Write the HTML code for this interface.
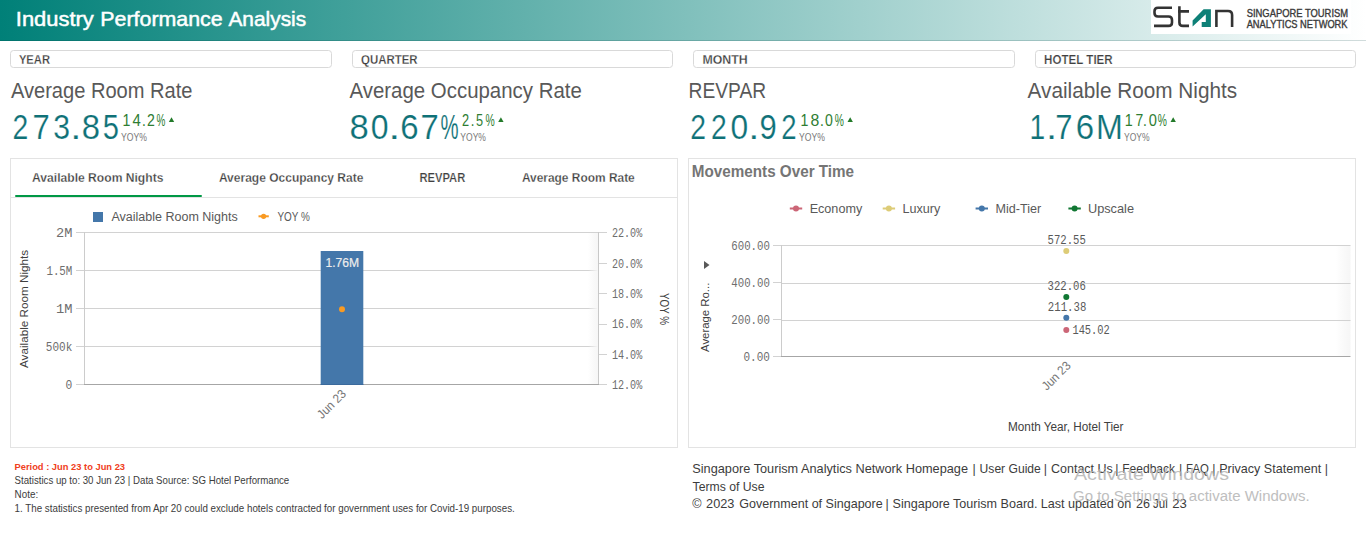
<!DOCTYPE html>
<html><head><meta charset="utf-8"><title>Industry Performance Analysis</title>
<style>
html,body{margin:0;padding:0;background:#fff;width:1366px;height:538px;overflow:hidden;font-family:"Liberation Sans",sans-serif}
#hdr{position:absolute;left:0;top:0;width:1366px;height:40px;background:linear-gradient(to right,#008078 0px,#ffffff 1366px);border-bottom:1px solid rgba(0,60,60,0.18)}
#logo{position:absolute;left:1151px;top:0;width:200px;height:34px;background:#fff}
svg{display:block}
</style></head><body>
<div id="hdr"></div>
<div id="logo"></div>
<svg style="position:absolute;left:1145px;top:0" width="100" height="36" viewBox="1145 0 100 36">
<path d="M1172,7.8 H1158 Q1154.5,7.8 1154.5,11.3 V13 Q1154.5,16.5 1158,16.5 H1168.5 Q1172,16.5 1172,20 V22.4 Q1172,25.9 1168.5,25.9 H1154" fill="none" stroke="#333" stroke-width="2.6"/>
<path d="M1179.4,6.2 V22.4 Q1179.4,25.9 1182.9,25.9 H1189 M1178,11.35 H1189" fill="none" stroke="#333" stroke-width="2.6"/>
<path d="M1192.6,20.5 L1192.6,26.4 L1205.8,14.3 L1205.8,22 L1201.7,22 L1201.7,27 L1210.9,27 L1210.9,9.15 L1203.6,9.15 Z" fill="#0e8077"/>
<path d="M1216.4,27 V11 H1228 Q1232.1,11 1232.1,15 V27" fill="none" stroke="#333" stroke-width="2.6"/>
</svg>
<svg style="position:absolute;left:0;top:0" width="1366" height="538" viewBox="0 0 1366 538">
<defs><linearGradient id="fadeR" x1="0" x2="1" y1="0" y2="0"><stop offset="0" stop-color="#f4f4f4" stop-opacity="0"/><stop offset="1" stop-color="#f6f6f6" stop-opacity="1"/></linearGradient></defs>
<rect x="10.5" y="50.5" width="321.0" height="17" rx="3" ry="3" fill="#fff" stroke="#d9d9d9" stroke-width="1"/>
<rect x="352.5" y="50.5" width="320.0" height="17" rx="3" ry="3" fill="#fff" stroke="#d9d9d9" stroke-width="1"/>
<rect x="693.5" y="50.5" width="321.0" height="17" rx="3" ry="3" fill="#fff" stroke="#d9d9d9" stroke-width="1"/>
<rect x="1035.5" y="50.5" width="320.0" height="17" rx="3" ry="3" fill="#fff" stroke="#d9d9d9" stroke-width="1"/>
<rect x="10.5" y="158.5" width="667" height="289" fill="#fff" stroke="#e3e3e3" stroke-width="1"/>
<rect x="688.5" y="158.5" width="667" height="289" fill="#fff" stroke="#e3e3e3" stroke-width="1"/>
<line x1="11" y1="197.5" x2="677" y2="197.5" stroke="#e3e3e3" stroke-width="1"/>
<rect x="15" y="195" width="187" height="2" rx="1" fill="#009845"/>
<line x1="84" y1="232.5" x2="598" y2="232.5" stroke="#d2d2d2"/>
<line x1="76" y1="232.5" x2="84" y2="232.5" stroke="#d2d2d2"/>
<line x1="84" y1="270.5" x2="598" y2="270.5" stroke="#d2d2d2"/>
<line x1="76" y1="270.5" x2="84" y2="270.5" stroke="#d2d2d2"/>
<line x1="84" y1="308.5" x2="598" y2="308.5" stroke="#d2d2d2"/>
<line x1="76" y1="308.5" x2="84" y2="308.5" stroke="#d2d2d2"/>
<line x1="84" y1="346.5" x2="598" y2="346.5" stroke="#d2d2d2"/>
<line x1="76" y1="346.5" x2="84" y2="346.5" stroke="#d2d2d2"/>
<line x1="76" y1="384.5" x2="84" y2="384.5" stroke="#d2d2d2"/>
<line x1="84.5" y1="232" x2="84.5" y2="384" stroke="#cccccc"/>
<line x1="598.5" y1="232" x2="598.5" y2="384" stroke="#c8c8c8"/>
<line x1="599" y1="232.5" x2="607" y2="232.5" stroke="#d2d2d2"/>
<line x1="599" y1="263.5" x2="607" y2="263.5" stroke="#d2d2d2"/>
<line x1="599" y1="293.5" x2="607" y2="293.5" stroke="#d2d2d2"/>
<line x1="599" y1="324.5" x2="607" y2="324.5" stroke="#d2d2d2"/>
<line x1="599" y1="354.5" x2="607" y2="354.5" stroke="#d2d2d2"/>
<line x1="599" y1="384.5" x2="607" y2="384.5" stroke="#d2d2d2"/>
<line x1="84" y1="384.5" x2="599" y2="384.5" stroke="#a6a6a6"/>
<rect x="320.7" y="251" width="42.6" height="134" fill="#4477aa"/>
<rect x="320.7" y="384" width="42.6" height="1" fill="#3b6a9c"/>
<circle cx="342" cy="309.3" r="3" fill="#f99a22"/>
<rect x="93" y="212" width="10" height="10" fill="#4477aa"/>
<rect x="258.5" y="215.3" width="10.3" height="2" fill="#f99a22"/><circle cx="263.6" cy="216.3" r="2.6" fill="#f99a22"/>
<rect x="1336" y="245" width="14.5" height="111" fill="url(#fadeR)"/>
<rect x="588" y="233" width="10" height="151" fill="url(#fadeR)"/>
<line x1="781" y1="245.5" x2="1350.5" y2="245.5" stroke="#d2d2d2"/>
<line x1="781" y1="283.5" x2="1350.5" y2="283.5" stroke="#d2d2d2"/>
<line x1="781" y1="320.5" x2="1350.5" y2="320.5" stroke="#d2d2d2"/>
<line x1="773" y1="245.5" x2="781" y2="245.5" stroke="#d2d2d2"/>
<line x1="773" y1="282.5" x2="781" y2="282.5" stroke="#d2d2d2"/>
<line x1="773" y1="319.5" x2="781" y2="319.5" stroke="#d2d2d2"/>
<line x1="773" y1="356.5" x2="781" y2="356.5" stroke="#d2d2d2"/>
<line x1="781.5" y1="245" x2="781.5" y2="356" stroke="#cccccc"/>
<line x1="781" y1="356.5" x2="1350.5" y2="356.5" stroke="#a6a6a6"/>
<circle cx="1066.3" cy="251" r="3" fill="#ddcc77"/>
<circle cx="1066.3" cy="297" r="3" fill="#117733"/>
<circle cx="1066.3" cy="317.8" r="3" fill="#4477aa"/>
<circle cx="1066.3" cy="330" r="3" fill="#cc6677"/>
<rect x="789.8" y="207.5" width="12.4" height="2" fill="#cc6677"/><circle cx="796.0" cy="208.5" r="3" fill="#cc6677"/>
<rect x="882.7" y="207.5" width="12.4" height="2" fill="#ddcc77"/><circle cx="888.9000000000001" cy="208.5" r="3" fill="#ddcc77"/>
<rect x="975.6" y="207.5" width="12.4" height="2" fill="#4477aa"/><circle cx="981.8000000000001" cy="208.5" r="3" fill="#4477aa"/>
<rect x="1068.4" y="207.5" width="12.4" height="2" fill="#117733"/><circle cx="1074.6000000000001" cy="208.5" r="3" fill="#117733"/>
<path d="M704 261 L709.5 265 L704 269 Z" fill="#595959"/>
<path d="M171.5 117.2 L174.2 121.9 L168.8 121.9 Z" fill="#237a2a"/>
<path d="M500.9 117.2 L503.59999999999997 121.9 L498.2 121.9 Z" fill="#237a2a"/>
<path d="M850.2 117.2 L852.9000000000001 121.9 L847.5 121.9 Z" fill="#237a2a"/>
<path d="M1173.2 117.2 L1175.9 121.9 L1170.5 121.9 Z" fill="#237a2a"/>
<text transform="translate(15.81 25.75) scale(1.0411 1)" fill="#ffffff" style="font-family:'Liberation Sans',sans-serif;font-size:21.08px;font-weight:normal" stroke="#ffffff" stroke-width="0.5">Industry</text>
<text transform="translate(100.34 25.75) scale(1.0148 1)" fill="#ffffff" style="font-family:'Liberation Sans',sans-serif;font-size:21.08px;font-weight:normal" stroke="#ffffff" stroke-width="0.5">Performance</text>
<text transform="translate(228.45 25.75) scale(0.9904 1)" fill="#ffffff" style="font-family:'Liberation Sans',sans-serif;font-size:21.08px;font-weight:normal" stroke="#ffffff" stroke-width="0.5">Analysis</text>
<text transform="translate(1246.67 16.52) scale(0.9168 1)" fill="#3a3a3a" style="font-family:'Liberation Sans',sans-serif;font-size:10.25px;font-weight:normal" stroke="#3a3a3a" stroke-width="0.35">SINGAPORE TOURISM</text>
<text transform="translate(1246.67 27.52) scale(0.9064 1)" fill="#3a3a3a" style="font-family:'Liberation Sans',sans-serif;font-size:10.25px;font-weight:normal" stroke="#3a3a3a" stroke-width="0.35">ANALYTICS NETWORK</text>
<text transform="translate(18.88 63.92) scale(0.8550 1)" fill="#404040" style="font-family:'Liberation Sans',sans-serif;font-size:13.15px;font-weight:bold" stroke="#ffffff" stroke-width="0.25">YEAR</text>
<text transform="translate(360.98 63.92) scale(0.8712 1)" fill="#404040" style="font-family:'Liberation Sans',sans-serif;font-size:13.15px;font-weight:bold" stroke="#ffffff" stroke-width="0.25">QUARTER</text>
<text transform="translate(702.38 63.92) scale(0.9385 1)" fill="#404040" style="font-family:'Liberation Sans',sans-serif;font-size:13.15px;font-weight:bold" stroke="#ffffff" stroke-width="0.25">MONTH</text>
<text transform="translate(1044.08 63.92) scale(0.8821 1)" fill="#404040" style="font-family:'Liberation Sans',sans-serif;font-size:13.15px;font-weight:bold" stroke="#ffffff" stroke-width="0.25">HOTEL TIER</text>
<text transform="translate(10.90 97.80) scale(0.9346 1)" fill="#595959" style="font-family:'Liberation Sans',sans-serif;font-size:21.51px;font-weight:normal">Average Room Rate</text>
<text transform="translate(349.50 97.80) scale(0.9493 1)" fill="#595959" style="font-family:'Liberation Sans',sans-serif;font-size:21.51px;font-weight:normal">Average Occupancy Rate</text>
<text transform="translate(688.61 97.80) scale(0.8934 1)" fill="#595959" style="font-family:'Liberation Sans',sans-serif;font-size:21.51px;font-weight:normal">REVPAR</text>
<text transform="translate(1027.60 97.80) scale(0.9651 1)" fill="#595959" style="font-family:'Liberation Sans',sans-serif;font-size:21.51px;font-weight:normal">Available Room Nights</text>
<text transform="translate(12.39 139.30) scale(0.8118 1)" fill="#0f7177" style="font-family:'Liberation Sans',sans-serif;font-size:34.88px;font-weight:normal" stroke="#ffffff" stroke-width="0.2">2</text>
<text transform="translate(32.51 139.30) scale(0.8882 1)" fill="#0f7177" style="font-family:'Liberation Sans',sans-serif;font-size:34.88px;font-weight:normal" stroke="#ffffff" stroke-width="0.2">7</text>
<text transform="translate(53.14 139.30) scale(0.8647 1)" fill="#0f7177" style="font-family:'Liberation Sans',sans-serif;font-size:34.88px;font-weight:normal" stroke="#ffffff" stroke-width="0.2">3</text>
<text transform="translate(70.35 139.30) scale(1.1500 1)" fill="#0f7177" style="font-family:'Liberation Sans',sans-serif;font-size:34.88px;font-weight:normal" stroke="#ffffff" stroke-width="0.2">.</text>
<text transform="translate(81.66 139.30) scale(0.9412 1)" fill="#0f7177" style="font-family:'Liberation Sans',sans-serif;font-size:34.88px;font-weight:normal" stroke="#ffffff" stroke-width="0.2">8</text>
<text transform="translate(102.86 139.30) scale(0.8353 1)" fill="#0f7177" style="font-family:'Liberation Sans',sans-serif;font-size:34.88px;font-weight:normal" stroke="#ffffff" stroke-width="0.2">5</text>
<text transform="translate(349.61 139.30) scale(0.9941 1)" fill="#0f7177" style="font-family:'Liberation Sans',sans-serif;font-size:34.88px;font-weight:normal" stroke="#ffffff" stroke-width="0.2">8</text>
<text transform="translate(370.78 139.30) scale(0.9167 1)" fill="#0f7177" style="font-family:'Liberation Sans',sans-serif;font-size:34.88px;font-weight:normal" stroke="#ffffff" stroke-width="0.2">0</text>
<text transform="translate(388.15 139.30) scale(1.2500 1)" fill="#0f7177" style="font-family:'Liberation Sans',sans-serif;font-size:34.88px;font-weight:normal" stroke="#ffffff" stroke-width="0.2">.</text>
<text transform="translate(400.15 139.30) scale(0.9471 1)" fill="#0f7177" style="font-family:'Liberation Sans',sans-serif;font-size:34.88px;font-weight:normal" stroke="#ffffff" stroke-width="0.2">6</text>
<text transform="translate(420.46 139.30) scale(0.9412 1)" fill="#0f7177" style="font-family:'Liberation Sans',sans-serif;font-size:34.88px;font-weight:normal" stroke="#ffffff" stroke-width="0.2">7</text>
<text transform="translate(440.52 139.30) scale(0.5828 1)" fill="#0f7177" style="font-family:'Liberation Sans',sans-serif;font-size:34.88px;font-weight:normal" stroke="#ffffff" stroke-width="0.2">%</text>
<text transform="translate(690.29 139.30) scale(0.8118 1)" fill="#0f7177" style="font-family:'Liberation Sans',sans-serif;font-size:34.88px;font-weight:normal" stroke="#ffffff" stroke-width="0.2">2</text>
<text transform="translate(710.89 139.30) scale(0.8118 1)" fill="#0f7177" style="font-family:'Liberation Sans',sans-serif;font-size:34.88px;font-weight:normal" stroke="#ffffff" stroke-width="0.2">2</text>
<text transform="translate(730.59 139.30) scale(0.9111 1)" fill="#0f7177" style="font-family:'Liberation Sans',sans-serif;font-size:34.88px;font-weight:normal" stroke="#ffffff" stroke-width="0.2">0</text>
<text transform="translate(748.25 139.30) scale(1.1500 1)" fill="#0f7177" style="font-family:'Liberation Sans',sans-serif;font-size:34.88px;font-weight:normal" stroke="#ffffff" stroke-width="0.2">.</text>
<text transform="translate(759.61 139.30) scale(0.8882 1)" fill="#0f7177" style="font-family:'Liberation Sans',sans-serif;font-size:34.88px;font-weight:normal" stroke="#ffffff" stroke-width="0.2">9</text>
<text transform="translate(781.21 139.30) scale(0.7882 1)" fill="#0f7177" style="font-family:'Liberation Sans',sans-serif;font-size:34.88px;font-weight:normal" stroke="#ffffff" stroke-width="0.2">2</text>
<text transform="translate(1029.49 139.30) scale(0.8062 1)" fill="#0f7177" style="font-family:'Liberation Sans',sans-serif;font-size:34.88px;font-weight:normal" stroke="#ffffff" stroke-width="0.2">1</text>
<text transform="translate(1046.05 139.30) scale(1.1500 1)" fill="#0f7177" style="font-family:'Liberation Sans',sans-serif;font-size:34.88px;font-weight:normal" stroke="#ffffff" stroke-width="0.2">.</text>
<text transform="translate(1055.21 139.30) scale(0.8882 1)" fill="#0f7177" style="font-family:'Liberation Sans',sans-serif;font-size:34.88px;font-weight:normal" stroke="#ffffff" stroke-width="0.2">7</text>
<text transform="translate(1075.75 139.30) scale(0.9471 1)" fill="#0f7177" style="font-family:'Liberation Sans',sans-serif;font-size:34.88px;font-weight:normal" stroke="#ffffff" stroke-width="0.2">6</text>
<text transform="translate(1095.95 139.30) scale(0.9240 1)" fill="#0f7177" style="font-family:'Liberation Sans',sans-serif;font-size:34.88px;font-weight:normal" stroke="#ffffff" stroke-width="0.2">M</text>
<text transform="translate(122.58 126.00) scale(0.8250 1)" fill="#2e7d32" style="font-family:'Liberation Sans',sans-serif;font-size:17.15px;font-weight:normal">1</text>
<text transform="translate(132.40 126.00) scale(0.8700 1)" fill="#2e7d32" style="font-family:'Liberation Sans',sans-serif;font-size:17.15px;font-weight:normal">4</text>
<text transform="translate(141.90 126.00) scale(0.8000 1)" fill="#2e7d32" style="font-family:'Liberation Sans',sans-serif;font-size:17.15px;font-weight:normal">.</text>
<text transform="translate(147.10 126.00) scale(0.8222 1)" fill="#2e7d32" style="font-family:'Liberation Sans',sans-serif;font-size:17.15px;font-weight:normal">2</text>
<text transform="translate(156.50 126.00) scale(0.5800 1)" fill="#2e7d32" style="font-family:'Liberation Sans',sans-serif;font-size:17.15px;font-weight:normal">%</text>
<text transform="translate(462.00 126.00) scale(0.7444 1)" fill="#2e7d32" style="font-family:'Liberation Sans',sans-serif;font-size:17.15px;font-weight:normal">2</text>
<text transform="translate(470.63 126.00) scale(0.7667 1)" fill="#2e7d32" style="font-family:'Liberation Sans',sans-serif;font-size:17.15px;font-weight:normal">.</text>
<text transform="translate(476.10 126.00) scale(0.7444 1)" fill="#2e7d32" style="font-family:'Liberation Sans',sans-serif;font-size:17.15px;font-weight:normal">5</text>
<text transform="translate(485.40 126.00) scale(0.6067 1)" fill="#2e7d32" style="font-family:'Liberation Sans',sans-serif;font-size:17.15px;font-weight:normal">%</text>
<text transform="translate(800.57 126.00) scale(0.8250 1)" fill="#2e7d32" style="font-family:'Liberation Sans',sans-serif;font-size:17.15px;font-weight:normal">1</text>
<text transform="translate(810.40 126.00) scale(0.9222 1)" fill="#2e7d32" style="font-family:'Liberation Sans',sans-serif;font-size:17.15px;font-weight:normal">8</text>
<text transform="translate(819.90 126.00) scale(0.8000 1)" fill="#2e7d32" style="font-family:'Liberation Sans',sans-serif;font-size:17.15px;font-weight:normal">.</text>
<text transform="translate(825.10 126.00) scale(0.8222 1)" fill="#2e7d32" style="font-family:'Liberation Sans',sans-serif;font-size:17.15px;font-weight:normal">0</text>
<text transform="translate(834.80 126.00) scale(0.6000 1)" fill="#2e7d32" style="font-family:'Liberation Sans',sans-serif;font-size:17.15px;font-weight:normal">%</text>
<text transform="translate(1124.86 126.00) scale(0.8375 1)" fill="#2e7d32" style="font-family:'Liberation Sans',sans-serif;font-size:17.15px;font-weight:normal">1</text>
<text transform="translate(1135.40 126.00) scale(0.8111 1)" fill="#2e7d32" style="font-family:'Liberation Sans',sans-serif;font-size:17.15px;font-weight:normal">7</text>
<text transform="translate(1142.90 126.00) scale(0.8000 1)" fill="#2e7d32" style="font-family:'Liberation Sans',sans-serif;font-size:17.15px;font-weight:normal">.</text>
<text transform="translate(1148.80 126.00) scale(0.8556 1)" fill="#2e7d32" style="font-family:'Liberation Sans',sans-serif;font-size:17.15px;font-weight:normal">0</text>
<text transform="translate(1157.80 126.00) scale(0.6000 1)" fill="#2e7d32" style="font-family:'Liberation Sans',sans-serif;font-size:17.15px;font-weight:normal">%</text>
<text transform="translate(121.00 141.40) scale(0.7831 1)" fill="#7a7a7a" style="font-family:'Liberation Sans',sans-serif;font-size:11.05px;font-weight:normal">YOY%</text>
<text transform="translate(460.30 141.40) scale(0.7741 1)" fill="#7a7a7a" style="font-family:'Liberation Sans',sans-serif;font-size:11.05px;font-weight:normal">YOY%</text>
<text transform="translate(799.00 141.40) scale(0.7831 1)" fill="#7a7a7a" style="font-family:'Liberation Sans',sans-serif;font-size:11.05px;font-weight:normal">YOY%</text>
<text transform="translate(1124.00 141.40) scale(0.7741 1)" fill="#7a7a7a" style="font-family:'Liberation Sans',sans-serif;font-size:11.05px;font-weight:normal">YOY%</text>
<text transform="translate(32.08 182.12) scale(0.9216 1)" fill="#404040" style="font-family:'Liberation Sans',sans-serif;font-size:13.15px;font-weight:bold" stroke="#ffffff" stroke-width="0.25">Available Room Nights</text>
<text transform="translate(218.88 182.12) scale(0.9147 1)" fill="#404040" style="font-family:'Liberation Sans',sans-serif;font-size:13.15px;font-weight:bold" stroke="#ffffff" stroke-width="0.25">Average Occupancy Rate</text>
<text transform="translate(419.38 182.12) scale(0.8536 1)" fill="#404040" style="font-family:'Liberation Sans',sans-serif;font-size:13.15px;font-weight:bold" stroke="#ffffff" stroke-width="0.25">REVPAR</text>
<text transform="translate(521.88 182.12) scale(0.9071 1)" fill="#404040" style="font-family:'Liberation Sans',sans-serif;font-size:13.15px;font-weight:bold" stroke="#ffffff" stroke-width="0.25">Average Room Rate</text>
<text transform="translate(111.50 221.00) scale(0.9253 1)" fill="#595959" style="font-family:'Liberation Sans',sans-serif;font-size:13.52px;font-weight:normal">Available Room Nights</text>
<text transform="translate(277.40 221.00) scale(0.7359 1)" fill="#595959" style="font-family:'Liberation Sans',sans-serif;font-size:13.52px;font-weight:normal">YOY %</text>
<text transform="translate(56.10 237.10) scale(1.0716 1)" fill="#6e6e6e" style="font-family:'Liberation Mono',monospace;font-size:12.75px;font-weight:normal">2M</text>
<text transform="translate(46.40 275.10) scale(0.8480 1)" fill="#6e6e6e" style="font-family:'Liberation Mono',monospace;font-size:12.75px;font-weight:normal">1.5M</text>
<text transform="translate(56.00 313.10) scale(1.0784 1)" fill="#6e6e6e" style="font-family:'Liberation Mono',monospace;font-size:12.75px;font-weight:normal">1M</text>
<text transform="translate(45.80 351.10) scale(0.8680 1)" fill="#6e6e6e" style="font-family:'Liberation Mono',monospace;font-size:12.75px;font-weight:normal">500k</text>
<text transform="translate(65.60 389.10) scale(0.8857 1)" fill="#6e6e6e" style="font-family:'Liberation Mono',monospace;font-size:12.75px;font-weight:normal">0</text>
<text transform="translate(611.90 237.10) scale(0.7952 1)" fill="#6e6e6e" style="font-family:'Liberation Mono',monospace;font-size:12.75px;font-weight:normal">22.0%</text>
<text transform="translate(611.90 267.50) scale(0.7952 1)" fill="#6e6e6e" style="font-family:'Liberation Mono',monospace;font-size:12.75px;font-weight:normal">20.0%</text>
<text transform="translate(611.90 297.90) scale(0.7952 1)" fill="#6e6e6e" style="font-family:'Liberation Mono',monospace;font-size:12.75px;font-weight:normal">18.0%</text>
<text transform="translate(611.90 328.30) scale(0.7952 1)" fill="#6e6e6e" style="font-family:'Liberation Mono',monospace;font-size:12.75px;font-weight:normal">16.0%</text>
<text transform="translate(611.90 358.70) scale(0.7952 1)" fill="#6e6e6e" style="font-family:'Liberation Mono',monospace;font-size:12.75px;font-weight:normal">14.0%</text>
<text transform="translate(611.90 389.10) scale(0.7952 1)" fill="#6e6e6e" style="font-family:'Liberation Mono',monospace;font-size:12.75px;font-weight:normal">12.0%</text>
<text transform="translate(325.50 267.40) scale(0.9491 1)" fill="#ececec" style="font-family:'Liberation Sans',sans-serif;font-size:12.79px;font-weight:normal" stroke="#ececec" stroke-width="0.2">1.76M</text>
<text transform="translate(24.50 309.00) rotate(-90) scale(1.1156 1) translate(-52.89 3.00)" fill="#404040" style="font-family:'Liberation Sans',sans-serif;font-size:10.5px;font-weight:normal">Available Room Nights</text>
<text transform="translate(664.90 309.30) rotate(90) scale(0.8217 1) translate(-19.84 4.50)" fill="#404040" style="font-family:'Liberation Sans',sans-serif;font-size:12px;font-weight:normal">YOY %</text>
<text transform="translate(331.30 403.85) rotate(-45) scale(0.9381 1) translate(-18.66 4.50)" fill="#767676" style="font-family:'Liberation Sans',sans-serif;font-size:12.4px;font-weight:normal">Jun 23</text>
<text transform="translate(691.80 177.00) scale(0.9040 1)" fill="#757575" style="font-family:'Liberation Sans',sans-serif;font-size:16.86px;font-weight:bold">Movements Over Time</text>
<text transform="translate(809.63 213.00) scale(0.9652 1)" fill="#595959" style="font-family:'Liberation Sans',sans-serif;font-size:13.08px;font-weight:normal">Economy</text>
<text transform="translate(902.44 213.00) scale(0.9635 1)" fill="#595959" style="font-family:'Liberation Sans',sans-serif;font-size:13.08px;font-weight:normal">Luxury</text>
<text transform="translate(995.54 213.00) scale(0.9616 1)" fill="#595959" style="font-family:'Liberation Sans',sans-serif;font-size:13.08px;font-weight:normal">Mid-Tier</text>
<text transform="translate(1087.92 213.00) scale(0.9766 1)" fill="#595959" style="font-family:'Liberation Sans',sans-serif;font-size:13.08px;font-weight:normal">Upscale</text>
<text transform="translate(731.30 250.10) scale(0.8419 1)" fill="#6e6e6e" style="font-family:'Liberation Mono',monospace;font-size:12.75px;font-weight:normal">600.00</text>
<text transform="translate(731.30 287.10) scale(0.8419 1)" fill="#6e6e6e" style="font-family:'Liberation Mono',monospace;font-size:12.75px;font-weight:normal">400.00</text>
<text transform="translate(731.30 324.10) scale(0.8419 1)" fill="#6e6e6e" style="font-family:'Liberation Mono',monospace;font-size:12.75px;font-weight:normal">200.00</text>
<text transform="translate(743.50 361.10) scale(0.8647 1)" fill="#6e6e6e" style="font-family:'Liberation Mono',monospace;font-size:12.75px;font-weight:normal">0.00</text>
<text transform="translate(1047.60 244.00) scale(0.8330 1)" fill="#595959" style="font-family:'Liberation Mono',monospace;font-size:12.75px;font-weight:normal">572.55</text>
<text transform="translate(1047.60 290.00) scale(0.8330 1)" fill="#595959" style="font-family:'Liberation Mono',monospace;font-size:12.75px;font-weight:normal">322.06</text>
<text transform="translate(1047.80 311.00) scale(0.8397 1)" fill="#595959" style="font-family:'Liberation Mono',monospace;font-size:12.75px;font-weight:normal">211.38</text>
<text transform="translate(1072.40 333.60) scale(0.8154 1)" fill="#595959" style="font-family:'Liberation Mono',monospace;font-size:12.75px;font-weight:normal">145.02</text>
<text transform="translate(706.00 317.75) rotate(-90) scale(1.0857 1) translate(-31.55 3.00)" fill="#404040" style="font-family:'Liberation Sans',sans-serif;font-size:10.5px;font-weight:normal">Average Ro...</text>
<text transform="translate(1056.00 375.50) rotate(-45) scale(0.9381 1) translate(-18.66 4.50)" fill="#767676" style="font-family:'Liberation Sans',sans-serif;font-size:12.4px;font-weight:normal">Jun 23</text>
<text transform="translate(1008.07 430.50) scale(0.9286 1)" fill="#404040" style="font-family:'Liberation Sans',sans-serif;font-size:12.65px;font-weight:normal">Month Year, Hotel Tier</text>
<text transform="translate(14.50 469.70) scale(1.0196 1)" fill="#f0401c" style="font-family:'Liberation Sans',sans-serif;font-size:9.16px;font-weight:bold">Period : Jun 23 to Jun 23</text>
<text transform="translate(14.60 483.80) scale(0.9512 1)" fill="#3c3c3c" style="font-family:'Liberation Sans',sans-serif;font-size:10.17px;font-weight:normal">Statistics up to: 30 Jun 23 | Data Source: SG Hotel Performance</text>
<text transform="translate(14.60 497.90) scale(0.9679 1)" fill="#3c3c3c" style="font-family:'Liberation Sans',sans-serif;font-size:10.17px;font-weight:normal">Note:</text>
<text transform="translate(14.60 511.70) scale(0.9620 1)" fill="#3c3c3c" style="font-family:'Liberation Sans',sans-serif;font-size:10.17px;font-weight:normal">1. The statistics presented from Apr 20 could exclude hotels contracted for government uses for Covid-19 purposes.</text>
<text transform="translate(692.30 472.70) scale(1.0321 1)" fill="#3c3c3c" style="font-family:'Liberation Sans',sans-serif;font-size:12.35px;font-weight:normal">Singapore Tourism Analytics Network Homepage</text>
<text transform="translate(979.60 472.70) scale(0.9814 1)" fill="#3c3c3c" style="font-family:'Liberation Sans',sans-serif;font-size:12.35px;font-weight:normal">User Guide</text>
<text transform="translate(1051.10 472.70) scale(1.0101 1)" fill="#3c3c3c" style="font-family:'Liberation Sans',sans-serif;font-size:12.35px;font-weight:normal">Contact Us</text>
<text transform="translate(1122.22 472.70) scale(0.9753 1)" fill="#3c3c3c" style="font-family:'Liberation Sans',sans-serif;font-size:12.35px;font-weight:normal">Feedback</text>
<text transform="translate(1186.08 472.70) scale(0.9215 1)" fill="#3c3c3c" style="font-family:'Liberation Sans',sans-serif;font-size:12.35px;font-weight:normal">FAQ</text>
<text transform="translate(1219.18 472.70) scale(1.0187 1)" fill="#3c3c3c" style="font-family:'Liberation Sans',sans-serif;font-size:12.35px;font-weight:normal">Privacy Statement</text>
<text x="972.40" y="472.70" fill="#3c3c3c" style="font-family:'Liberation Sans',sans-serif;font-size:12.35px;font-weight:normal">|</text>
<text x="1043.70" y="472.70" fill="#3c3c3c" style="font-family:'Liberation Sans',sans-serif;font-size:12.35px;font-weight:normal">|</text>
<text x="1115.30" y="472.70" fill="#3c3c3c" style="font-family:'Liberation Sans',sans-serif;font-size:12.35px;font-weight:normal">|</text>
<text x="1179.10" y="472.70" fill="#3c3c3c" style="font-family:'Liberation Sans',sans-serif;font-size:12.35px;font-weight:normal">|</text>
<text x="1212.20" y="472.70" fill="#3c3c3c" style="font-family:'Liberation Sans',sans-serif;font-size:12.35px;font-weight:normal">|</text>
<text x="1324.70" y="472.70" fill="#3c3c3c" style="font-family:'Liberation Sans',sans-serif;font-size:12.35px;font-weight:normal">|</text>
<text transform="translate(692.60 490.60) scale(0.9898 1)" fill="#3c3c3c" style="font-family:'Liberation Sans',sans-serif;font-size:12.35px;font-weight:normal">Terms of Use</text>
<text transform="translate(692.30 508.30) scale(1.0222 1)" fill="#3c3c3c" style="font-family:'Liberation Sans',sans-serif;font-size:12.35px;font-weight:normal">©</text>
<text transform="translate(706.10 508.30) scale(1.0328 1)" fill="#3c3c3c" style="font-family:'Liberation Sans',sans-serif;font-size:12.35px;font-weight:normal">2023</text>
<text transform="translate(739.20 508.30) scale(1.0157 1)" fill="#3c3c3c" style="font-family:'Liberation Sans',sans-serif;font-size:12.35px;font-weight:normal">Government of Singapore</text>
<text transform="translate(892.50 508.30) scale(1.0191 1)" fill="#3c3c3c" style="font-family:'Liberation Sans',sans-serif;font-size:12.35px;font-weight:normal">Singapore Tourism Board.</text>
<text transform="translate(1040.78 508.30) scale(1.0220 1)" fill="#3c3c3c" style="font-family:'Liberation Sans',sans-serif;font-size:12.35px;font-weight:normal">Last updated on</text>
<text transform="translate(1136.00 508.30) scale(1.0169 1)" fill="#3c3c3c" style="font-family:'Liberation Sans',sans-serif;font-size:12.35px;font-weight:normal">26</text>
<text transform="translate(1153.00 508.30) scale(0.9310 1)" fill="#3c3c3c" style="font-family:'Liberation Sans',sans-serif;font-size:12.35px;font-weight:normal">Jul</text>
<text transform="translate(1172.30 508.30) scale(1.0602 1)" fill="#3c3c3c" style="font-family:'Liberation Sans',sans-serif;font-size:12.35px;font-weight:normal">23</text>
<text x="885.50" y="508.30" fill="#3c3c3c" style="font-family:'Liberation Sans',sans-serif;font-size:12.35px;font-weight:normal">|</text>
<text transform="translate(1074.00 479.80) scale(1.2287 1)" fill="#b4b4b4" style="font-family:'Liberation Sans',sans-serif;font-size:15.99px;font-weight:normal" opacity="0.85">Activate Windows</text>
<text transform="translate(1073.00 500.70) scale(0.9829 1)" fill="#b4b4b4" style="font-family:'Liberation Sans',sans-serif;font-size:15.26px;font-weight:normal" opacity="0.85">Go to Settings to activate Windows.</text>
</svg>
</body></html>
